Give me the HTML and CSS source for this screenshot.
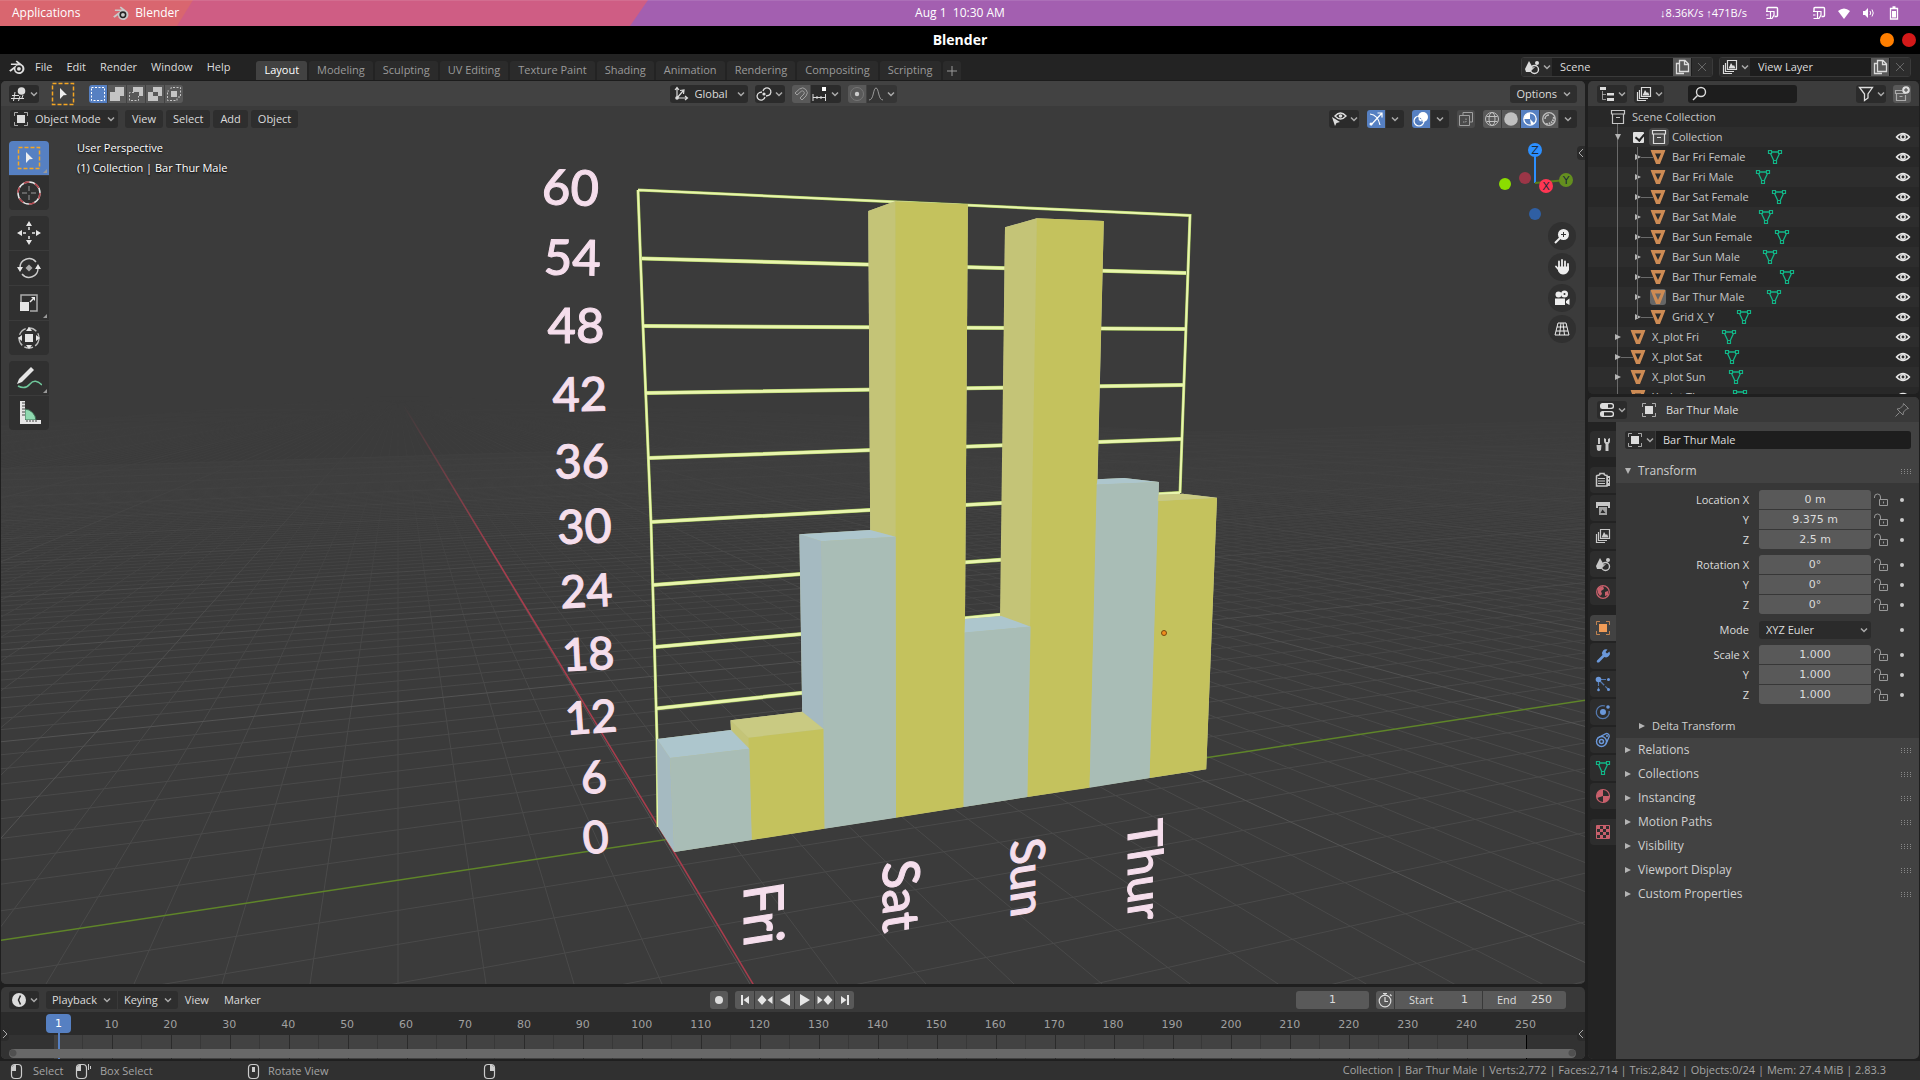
FILE: index.html
```html
<!DOCTYPE html>
<html lang="en">
<head>
<meta charset="utf-8">
<title>Blender</title>
<link rel="stylesheet" href="styles.css">
</head>
<body>
<svg class="defs" width="0" height="0" aria-hidden="true">
  <symbol id="i-caret" viewBox="0 0 8 8"><path d="M1 2.500 4 5.500 7 2.500" fill="none" stroke="currentColor" stroke-width="1.500"/></symbol>
  <symbol id="i-blender" viewBox="0 0 16 16"><path d="M1 11.200 7.500 6.200H2.600V4.800H8.800L6.800 3.200 7.900 2.200 13.600 6.700A4.700 4.700 0 1 1 5.200 10L2.300 12.300Z" fill="currentColor"/><circle cx="9.700" cy="9.600" r="3.100" fill="#232323"/><circle cx="9.700" cy="9.600" r="1.700" fill="currentColor"/></symbol>
  <symbol id="i-view3d" viewBox="0 0 16 16"><path d="M4 6 2.500 15M9 10 7.500 15M1 9.500H8M0 12.500H13M12 9 11 12" fill="none" stroke="currentColor"/><circle cx="10.500" cy="5" r="3.800" fill="currentColor"/></symbol>
  <symbol id="i-object" viewBox="0 0 16 16"><path d="M1.500 5V1.500H5M11 1.500H14.500V5M14.500 11V14.500H11M5 14.500H1.500V11" fill="none" stroke="currentColor" opacity=".7"/><path d="M4 4H12V12H4Z" fill="currentColor"/></symbol>
  <symbol id="i-cursor" viewBox="0 0 24 24"><rect x="1.500" y="1.500" width="21" height="21" fill="none" stroke="#f5a623" stroke-width="1.500" stroke-dasharray="4 2"/><path d="M9 6 16 13 12.500 13.200 9 17Z" fill="#eee"/></symbol>
  <symbol id="i-box" viewBox="0 0 18 18"><rect x="2.500" y="2.500" width="13" height="13" fill="none" stroke="#fff" stroke-dasharray="2 1.500"/></symbol>
  <symbol id="i-box2" viewBox="0 0 18 18"><path d="M7 2H16V11H12V16H2V7H7Z" fill="#c4c4c4"/></symbol>
  <symbol id="i-box3" viewBox="0 0 18 18"><path d="M6 2H16V11H12V7H6Z" fill="#c4c4c4"/><path d="M7 7.500H2.500V15.500H11.500V11" fill="none" stroke="#c4c4c4" stroke-dasharray="2 1.500"/></symbol>
  <symbol id="i-box4" viewBox="0 0 18 18"><path d="M7 2H16V11H12V16H2V7H7ZM7 7V11H12V7Z" fill="#c4c4c4" fill-rule="evenodd"/></symbol>
  <symbol id="i-box5" viewBox="0 0 18 18"><path d="M6 6H12V12H6Z" fill="#c4c4c4"/><path d="M6 4V2.500H15.500V12H13M12 13.500V15.500H2.500V6H4" fill="none" stroke="#c4c4c4" stroke-dasharray="2 1.500"/></symbol>
  <symbol id="i-axes" viewBox="0 0 16 16"><path d="M4 2V12H14M4 12 10 5M2 4 4 1.500 6 4M12 10 14.500 12 12 14M7 4.500 11 4 10.500 8" fill="none" stroke="currentColor" stroke-width="1.200"/><circle cx="4" cy="12" r="1.800" fill="currentColor"/></symbol>
  <symbol id="i-link" viewBox="0 0 16 16"><g fill="none" stroke="currentColor" stroke-width="1.300"><path d="M7 5A4 4 0 1 1 12.500 9.500L10 10"/><path d="M9 11A4 4 0 1 1 3.500 6.500L6 6"/></g><circle cx="8" cy="8" r="1.600" fill="currentColor"/></symbol>
  <symbol id="i-magnet" viewBox="0 0 16 16"><path d="M2 7 6.500 3A4.800 4.800 0 0 1 13 10L9 14 7 12 11 8A2 2 0 0 0 8.300 5.200L4 9Z" fill="none" stroke="currentColor"/></symbol>
  <symbol id="i-snap" viewBox="0 0 16 16"><path d="M1 8V15M1 11.500H14M5 10V13M9 10V13M13.500 8V15" fill="none" stroke="currentColor"/><path d="M10 1H14V5H10Z" fill="#fff"/></symbol>
  <symbol id="i-prop" viewBox="0 0 16 16"><circle cx="8" cy="8" r="6.500" fill="none" stroke="#777"/><circle cx="8" cy="8" r="2.200" fill="#ccc"/></symbol>
  <symbol id="i-curve" viewBox="0 0 16 16"><path d="M1 14C6 14 5 2 8 2S10 14 15 14" fill="none" stroke="#999"/></symbol>
  <symbol id="i-eye" viewBox="0 0 16 16"><path d="M1.500 8Q8 1 14.500 8Q8 15 1.500 8Z" fill="none" stroke="currentColor" stroke-width="1.500"/><circle cx="8" cy="8" r="2.200" fill="none" stroke="currentColor" stroke-width="1.500"/></symbol>
  <symbol id="i-vis" viewBox="0 0 16 16"><path d="M4 5Q9.500-1 15 5Q9.500 11 4 5Z" fill="none" stroke="currentColor" stroke-width="1.400"/><circle cx="9.500" cy="5" r="1.800" fill="currentColor"/><path d="M1 6 9 11 5.500 12 4 15Z" fill="currentColor"/></symbol>
  <symbol id="i-gizmo" viewBox="0 0 16 16"><path d="M2 3Q10 4 12 14M3 14 14 2M9.500 2H14V6.500" fill="none" stroke="currentColor" stroke-width="1.200"/><circle cx="3" cy="13" r="1.500" fill="currentColor"/></symbol>
  <symbol id="i-overlay" viewBox="0 0 16 16"><circle cx="10" cy="6" r="5" fill="currentColor"/><circle cx="6" cy="10" r="5" fill="none" stroke="currentColor" stroke-width="1.200"/><circle cx="6" cy="10" r="3" fill="none" stroke="#4772b3" stroke-dasharray="1.500 1"/></symbol>
  <symbol id="i-xray" viewBox="0 0 16 16"><path d="M5 1.500H14.500V11M11.500 4.500V14.500H1.500V4.500ZM5 4V1.500M11 11H14.500" fill="none" stroke="currentColor"/><path d="M5 11H8V7" fill="none" stroke="currentColor" stroke-dasharray="1.500 1"/></symbol>
  <symbol id="i-wire" viewBox="0 0 16 16"><g fill="none" stroke="currentColor"><circle cx="8" cy="8" r="6.500"/><ellipse cx="8" cy="8" rx="3" ry="6.500"/><path d="M2.500 5.500H13.500M2.500 10.500H13.500"/></g></symbol>
  <symbol id="i-solid" viewBox="0 0 16 16"><circle cx="8" cy="8" r="6.800" fill="currentColor"/></symbol>
  <symbol id="i-mat" viewBox="0 0 16 16"><circle cx="8" cy="8" r="6.200" fill="none" stroke="currentColor" stroke-width="1.300"/><path d="M8 2A6 6 0 0 0 2 8H8L9 14 12.500 12.500 8 8Z" fill="currentColor"/></symbol>
  <symbol id="i-rend" viewBox="0 0 16 16"><circle cx="8" cy="8" r="6.300" fill="none" stroke="currentColor" stroke-width="1.300"/><path d="M4 8A4 4 0 0 1 8 4" fill="none" stroke="currentColor" stroke-width="1.500"/><path d="M13 6Q12 13 5 13" fill="none" stroke="currentColor" stroke-width="2" stroke-dasharray="1.500 1"/></symbol>
  <symbol id="i-scene" viewBox="0 0 16 16"><path d="M5 2 9 9 6.500 13H2L1 10Z" fill="currentColor"/><circle cx="13" cy="4" r="2" fill="currentColor"/><circle cx="10.500" cy="10.500" r="4" fill="none" stroke="currentColor" stroke-width="1.400"/><path d="M8.500 10.500Q8.500 8.500 10.500 8.500" fill="none" stroke="currentColor"/></symbol>
  <symbol id="i-layer" viewBox="0 0 16 16"><path d="M5.500 1.500H14.500V10.500H5.500Z M3.500 4V12.500H12M1.500 6V14.500H10" fill="none" stroke="currentColor" stroke-width="1.200"/><path d="M6.500 9.500 9 4 11 7 12 6 13.500 9.500Z" fill="currentColor"/></symbol>
  <symbol id="i-copy" viewBox="0 0 16 16"><path d="M5.500 1.500H11L14.500 5V12.500H5.500ZM10.500 1.500V5.500H14.500M5 4.500H2.500V14.500H10" fill="none" stroke="currentColor" stroke-width="1.300"/></symbol>
  <symbol id="i-x" viewBox="0 0 16 16"><path d="M4 4 12 12M12 4 4 12" fill="none" stroke="currentColor"/></symbol>
  <symbol id="i-tree" viewBox="0 0 16 16"><path d="M1 1H7V4H1ZM8 7H15V9.500H8ZM8 12H15V15H8Z" fill="currentColor"/><path d="M3.500 5V13.500H7M3.500 8.500H7" fill="none" stroke="currentColor" opacity=".6"/></symbol>
  <symbol id="i-search" viewBox="0 0 16 16"><circle cx="10" cy="6" r="4.500" fill="none" stroke="currentColor" stroke-width="1.400"/><path d="M6.500 9.500 2 14" stroke="currentColor" stroke-width="1.400"/></symbol>
  <symbol id="i-filter" viewBox="0 0 16 16"><path d="M1.500 1.500H14.500L10 8V12L6.500 14.500V8Z" fill="none" stroke="currentColor" stroke-width="1.300"/></symbol>
  <symbol id="i-coll" viewBox="0 0 16 16"><path d="M1.500 1.500H14.500V5H1.500ZM2.500 5V14.500H13.500V5M6 8.500H10" fill="none" stroke="currentColor" stroke-width="1.200"/></symbol>
  <symbol id="i-newcoll" viewBox="0 0 16 16"><path d="M8 4.500H1.500V7.500H12M2.500 7.500V14.500H11.500V9M5.500 10.500H8.500" fill="none" stroke="#aaa" stroke-width="1.200"/><circle cx="12" cy="4" r="3.800" fill="#ddd"/><path d="M12 2V6M10 4H14" stroke="#444"/></symbol>
  <symbol id="i-mesh" viewBox="0 0 16 16"><path d="M.5 1H15.500L10 15H6ZM5 4.500 8 11 11 4.500Z" fill="#cd8b54" fill-rule="evenodd"/></symbol>
  <symbol id="i-data" viewBox="0 0 16 16"><path d="M4.500 3H11.500M3.500 4.500 7 12M12.500 4.500 9 12" fill="none" stroke="#12b587" stroke-width="1.300"/><path d="M1.500 1.500H4.500V4.500H1.500ZM11.500 1.500H14.500V4.500H11.500ZM6.500 11.500H9.500V14.500H6.500Z" fill="none" stroke="#12b587" stroke-width="1.200"/></symbol>
  <symbol id="i-props" viewBox="0 0 16 16"><rect x="1" y="1" width="14" height="6" rx="2.500" fill="currentColor"/><rect x="1" y="9" width="14" height="6" rx="2.500" fill="currentColor"/><path d="M9 2.200H12A1.800 1.800 0 0 1 12 5.800H9ZM5 10.200H12A1.800 1.800 0 0 1 12 13.800H5Z" fill="#2b2b2b"/></symbol>
  <symbol id="i-pin" viewBox="0 0 16 16"><path d="M9.500 1.500 14.500 6.500 12.500 7 9.500 10 9 13 3 7 6 6.500 9 3.500ZM5.500 10.500 1.500 14.500" fill="none" stroke="currentColor"/></symbol>
  <symbol id="i-tool" viewBox="0 0 16 16"><path d="M3 2H5V8H3ZM1.500 9H6.500L6 14Q4 16 2 14ZM9 2V5Q9 7 10.500 8V15H13.500V8Q15 7 15 5V2L13 3V6H11V3Z" fill="currentColor"/></symbol>
  <symbol id="i-render" viewBox="0 0 16 16"><path d="M2 3.500Q5 3.500 5 1.500H9Q9 3.500 12 3.500V14H1.500V4Z" fill="none" stroke="currentColor" stroke-width="1.500"/><path d="M3 6.500H10M3 9H10M3 11.500H10" stroke="currentColor" stroke-width="1.200"/><path d="M12 4H15V14H12Z" fill="currentColor"/><path d="M13 6H14V7.500H13ZM13 9.500H14V11H13Z" fill="#2b2b2b"/></symbol>
  <symbol id="i-output" viewBox="0 0 16 16"><path d="M1 2H15V8H13V6H3V8H1Z" fill="currentColor"/><path d="M4 7H12V15H4Z" fill="currentColor" opacity=".75"/><path d="M5.500 13 7.500 9.500 10.500 13Z" fill="#2b2b2b"/></symbol>
  <symbol id="i-world" viewBox="0 0 16 16"><circle cx="8" cy="8" r="6.300" fill="none" stroke="#c9606c" stroke-width="1.300"/><path d="M3 4 8 2 9 5 6 7 7 10 5 12 3 9ZM10 8 13 7 13 11 10 12Z" fill="#c9606c"/></symbol>
  <symbol id="i-wrench" viewBox="0 0 16 16"><path d="M2 12.500 7.500 7A4 4 0 0 1 12.500 1.500L10.500 4 12 5.500 14.500 3.500A4 4 0 0 1 9.300 9L4 14.500Q1 15 2 12.500Z" fill="#6b98da"/></symbol>
  <symbol id="i-part" viewBox="0 0 16 16"><path d="M3.500 4V14M5 5 13 13M5 3.500H13" stroke="#5478ad" stroke-width="1.200" stroke-dasharray="6 1.500"/><g fill="#6b98da"><circle cx="3.500" cy="3.500" r="2.800"/><circle cx="13.500" cy="3.500" r="1.500"/><circle cx="13.500" cy="13.500" r="1.500"/><circle cx="3.500" cy="14" r="1.300"/></g></symbol>
  <symbol id="i-phys" viewBox="0 0 16 16"><path d="M10 2A6.500 6.500 0 1 0 14.200 7" fill="none" stroke="#5478ad" stroke-width="1.300"/><circle cx="8" cy="8" r="3" fill="#6b98da"/><circle cx="13" cy="3" r="1.800" fill="#6b98da"/></symbol>
  <symbol id="i-cons" viewBox="0 0 16 16"><path d="M2.500 6 10.500 1.800A2.600 2.600 0 0 1 14.200 4.500L11 12" fill="none" stroke="#6b98da" stroke-width="1.300"/><circle cx="6.500" cy="9.500" r="5" fill="none" stroke="#6b98da" stroke-width="1.400"/><circle cx="6.500" cy="9.500" r="2" fill="none" stroke="#6b98da" stroke-width="1.500"/><circle cx="12" cy="4" r="1" fill="#6b98da"/></symbol>
  <symbol id="i-material" viewBox="0 0 16 16"><circle cx="8" cy="8" r="6.500" fill="none" stroke="#c9606c" stroke-width="1.200"/><path d="M8 8V1.500A6.500 6.500 0 0 0 2 10L8 8V14.500A6.500 6.500 0 0 0 14.500 8Z" fill="#c9606c"/></symbol>
  <symbol id="i-texture" viewBox="0 0 16 16"><path d="M1.500 1.500H14.500V14.500H1.500Z" fill="none" stroke="#c9606c"/><path d="M2 2H5V5H2ZM8 2H11V5H8ZM5 5H8V8H5ZM11 5H14V8H11ZM2 8H5V11H2ZM8 8H11V11H8ZM5 11H8V14H5ZM11 11H14V14H11Z" fill="#c9606c"/></symbol>
  <symbol id="i-lock" viewBox="0 0 16 16"><path d="M6.500 7.500H14.500V13.500H6.500ZM1.500 6V5A3 3 0 0 1 7.500 5V7M10.500 9.500V11.500" fill="none" stroke="#999"/></symbol>
  <symbol id="i-clock" viewBox="0 0 16 16"><circle cx="8" cy="8" r="7" fill="currentColor"/><path d="M9.500 3.500 7.500 8 9.500 12.500" fill="none" stroke="#2b2b2b" stroke-width="1.500"/></symbol>
  <symbol id="i-stopwatch" viewBox="0 0 16 16"><circle cx="8" cy="9" r="5.800" fill="none" stroke="currentColor" stroke-width="1.200"/><path d="M8 5V9.500H11M6 1.500H10M8 1.500V3M13 2.500 14.500 4" fill="none" stroke="currentColor" stroke-width="1.200"/></symbol>
  <symbol id="i-mouse" viewBox="0 0 16 18"><rect x="2.500" y="2.500" width="10" height="14" rx="3.500" fill="none" stroke="currentColor" stroke-width="1.200"/></symbol>
  <symbol id="i-phone" viewBox="0 0 14 14"><path d="M2 5V2.500Q2 1.500 3 1.500H11.500Q12.500 1.500 12.500 2.500V9.500Q12.500 10.500 11.500 10.500H9.500" fill="none" stroke="#fff" stroke-width="1.400"/><path d="M1 5.500H5.500V12.500H1.500M1 9H3.500M5.500 5.500H9V9L7 12.500H5.500" fill="none" stroke="#fff" stroke-width="1.200"/></symbol>
</svg>

<header class="sysbar">
  <svg class="sysbar-art" preserveAspectRatio="none" viewBox="0 0 1920 26" aria-hidden="true">
    <path d="M0 0H1920V26H0Z" fill="#a35fb0"/><path d="M0 0H648L630 26H0Z" fill="#cf5d84"/><path d="M0 0H193L177 26H0Z" fill="#d9666f"/><path d="M0 0H1920V1H0Z" fill="#fff" opacity=".1"/>
  </svg>
  <nav class="sys-left"><a href="#">Applications</a><a href="#" class="app"><svg width="18" height="18"><use href="#i-blender"/></svg>Blender</a></nav>
  <time class="sys-time">Aug 1&nbsp; 10:30 AM</time>
  <div class="sys-right"><span class="net">↓8.36K/s ↑471B/s</span>
    <svg width="14" height="14"><use href="#i-phone"/></svg>
    <svg class="spaced" width="14" height="14"><use href="#i-phone"/></svg>
    <svg width="14" height="14" viewBox="0 0 14 14"><path d="M1 5Q7 0 13 5L7 13Z" fill="#fff"/></svg>
    <svg width="14" height="14" viewBox="0 0 14 14"><path d="M1 5H3L6 2V12L3 9H1Z" fill="#fff"/><path d="M8 5Q9.500 7 8 9M10 3.500Q12.500 7 10 10.500" fill="none" stroke="#fff"/></svg>
    <svg width="14" height="14" viewBox="0 0 14 14"><path d="M3.500 2.500H10.500V13H3.500ZM5.500 1H8.500" fill="none" stroke="#fff" stroke-width="1.300"/><path d="M5 5H9V11.500H5Z" fill="#fff"/></svg>
  </div>
</header>
<div class="titlebar"><h1>Blender</h1><div class="winbtns"><button class="min" aria-label="Minimize"></button><button class="close" aria-label="Close"></button></div></div>

<div class="menubar">
  <svg class="logo" width="18" height="18"><use href="#i-blender"/></svg>
  <nav class="menus"><button>File</button><button>Edit</button><button>Render</button><button>Window</button><button>Help</button></nav>
  <nav class="tabs"><button class="on">Layout</button><button>Modeling</button><button>Sculpting</button><button>UV Editing</button><button>Texture Paint</button><button>Shading</button><button>Animation</button><button>Rendering</button><button>Compositing</button><button>Scripting</button><button class="plus" aria-label="Add workspace"><svg width="10" height="10" viewBox="0 0 10 10"><path d="M5 0V10M0 5H10" stroke="currentColor"/></svg></button></nav>
  <div class="idblocks">
    <div class="group idb"><button class="dd" aria-label="Browse scene"><svg width="16" height="16"><use href="#i-scene"/></svg><svg class="c" width="8" height="8"><use href="#i-caret"/></svg></button><input value="Scene" aria-label="Scene"><button class="lite" aria-label="New scene"><svg width="16" height="16"><use href="#i-copy"/></svg></button><button class="off" aria-label="Delete scene"><svg width="16" height="16"><use href="#i-x"/></svg></button></div>
    <div class="group idb"><button class="dd" aria-label="Browse layer"><svg width="16" height="16"><use href="#i-layer"/></svg><svg class="c" width="8" height="8"><use href="#i-caret"/></svg></button><input value="View Layer" aria-label="View layer"><button class="lite" aria-label="New layer"><svg width="16" height="16"><use href="#i-copy"/></svg></button><button class="off" aria-label="Delete layer"><svg width="16" height="16"><use href="#i-x"/></svg></button></div>
  </div>
</div>

<main class="work">
  <div class="left">
    <section class="area viewport">
      <svg class="scene" viewBox="1 81 1584 903" preserveAspectRatio="xMidYMid slice" role="img" aria-label="3D bar chart">
        <defs>
          <linearGradient id="fade" gradientUnits="userSpaceOnUse" x1="0" y1="395" x2="0" y2="700"><stop offset="0" stop-color="#fff" stop-opacity="0"/><stop offset=".3" stop-color="#fff" stop-opacity=".3"/><stop offset="1" stop-color="#fff"/></linearGradient>
          <mask id="far" maskUnits="userSpaceOnUse" x="0" y="380" width="1600" height="620"><path d="M0 380H1600V1000H0Z" fill="url(#fade)"/></mask>
          <linearGradient id="redfade" gradientUnits="userSpaceOnUse" x1="0" y1="405" x2="0" y2="560"><stop offset="0" stop-color="#a83c4c" stop-opacity="0"/><stop offset="1" stop-color="#a83c4c"/></linearGradient>
        </defs>
        <path d="M0 80H1600V1000H0Z" fill="#3b3b3b"/>
        <g mask="url(#far)"><path id="minor" fill="none" stroke="#4a4a4a"/><path id="major" fill="none" stroke="#545454"/></g>
        <path d="M0 940.500 1600 698" stroke="#5f8529" stroke-width="1.500"/>
        <path d="M398 396 520 598 674 852 756 989" fill="none" stroke="url(#redfade)" stroke-width="1.500"/>
        <g class="wire">
          <path class="edge" d="M642 258.500 1186 273M644 326 1185 329M646 393 1183 385M649 458 1181 439M651 522 870 510 1002 503 1180 493M653 585 801 574 1001 559.700M655 647 802 634 1001 614.700M656 708.500 803 692.700"/>
          <path class="edge frame-edge" d="M638 190 643 326 651 522 657 739 658 827M638 190 1190 215.500 1180 493"/>
          <path d="M642 258.500 1186 273M644 326 1185 329M646 393 1183 385M649 458 1181 439M651 522 870 510 1002 503 1180 493M653 585 801 574 1001 559.700M655 647 802 634 1001 614.700M656 708.500 803 692.700"/>
          <path class="frame-line" d="M638 190 643 326 651 522 657 739 658 827M638 190 1190 215.500 1180 493"/>
        </g>
        <path d="M657 739 731 730 730.500 720.300 802.200 711.700 799.400 534.300 870.200 530 868.300 211 895.200 201.300 967.900 204.300 965 619 1001.400 616 1005 227.300 1036.800 218.300 1103.800 221 1097.600 479.300 1124 478 1159 482 1158.500 494.700 1182.600 493.700 1217 497.700 1206.200 769.300 674.300 852 658.300 827Z" fill="#b9c29a"/>
        <g fill="#c4c477"><path d="M1005 227.300 1037 218.300 1031 627 1000 616Z"/><path d="M868.300 211 895.200 201.300 896 537 870.200 530Z"/></g>
        <g fill="#c4c25d"><path d="M1036.800 218.300 1103.800 221 1089.600 787.700 1027.300 797Z"/><path d="M895.200 201.300 967.900 204.300 963.600 807 896 817.700Z"/><path d="M1157.600 501 1217 497.700 1206.200 769.300 1149.500 778Z"/></g>
        <path d="M1097.500 479.300 1124 478 1159 482 1096.700 484.700Z" fill="#adc6cd"/><path d="M1096.700 484.500 1159 482 1149.500 778 1089.600 787.700Z" fill="#a9bdb6"/>
        <path d="M1158.500 494.700 1182.600 493.700 1217 497.700 1157.600 501Z" fill="#c9ca82"/>
        <path d="M965 619 1001.400 616 1030.600 626.700 964.600 632.700Z" fill="#adc6cd"/><path d="M964.600 632.500 1030.600 626.500 1027.300 797 963.600 807Z" fill="#a9bdb6"/>
        <path d="M799.400 534.300 870.200 530 895.600 536.700 821.600 541.300Z" fill="#adc6cd"/><path d="M799.400 534.300 821.600 541.300 824 729 802.200 712Z" fill="#a5bac1"/><path d="M821.500 541.200 895.600 536.700 896 817.700 824.400 828.700Z" fill="#a9bdb6"/>
        <path d="M730.500 720.300 802.200 711.700 823.400 729 748.400 738Z" fill="#c9ca82"/><path d="M730.500 720.300 748.500 737.700 749.500 749 731 730.500Z" fill="#c4c477"/><path d="M748.400 737.700 823.400 729 824.400 828.700 751.700 840Z" fill="#c4c25d"/>
        <path d="M657 739 731 730 749.400 748.700 670 758Z" fill="#adc6cd"/><path d="M657 739 670 758 674.300 852 658.300 827Z" fill="#a5bac1"/><path d="M670 758 749.400 748.700 751.700 840 674.300 852Z" fill="#a9bdb6"/>
        <circle cx="1164" cy="633" r="2.500" fill="#f08c1e" stroke="#7a4a10"/>
        <g class="ticktext">
          <text font-size="49" transform="translate(570 205) rotate(2)">60</text>
          <text font-size="49" transform="translate(572 275) rotate(1)">54</text>
          <text font-size="49" transform="translate(576 343)">48</text>
          <text font-size="47" transform="translate(580 411) rotate(-1)">42</text>
          <text font-size="47" transform="translate(582 478) rotate(-1)">36</text>
          <text font-size="47" transform="translate(585 543) rotate(-2)">30</text>
          <text font-size="45" transform="translate(587 607) rotate(-3)">24</text>
          <text font-size="45" transform="translate(589 670) rotate(-3)">18</text>
          <text font-size="45" transform="translate(592 733) rotate(-4)">12</text>
          <text font-size="45" transform="translate(595 793) rotate(-5)">6</text>
          <text font-size="45" transform="translate(597 853) rotate(-5)">0</text>
        </g>
        <g class="daytext">
          <text font-size="55" transform="translate(744 886) rotate(90) skewX(9)">Fri</text>
          <text font-size="51" transform="translate(883 863) rotate(90) skewX(9)">Sat</text>
          <text font-size="47" transform="translate(1011 841) rotate(90) skewX(9)">Sun</text>
          <text font-size="48" transform="translate(1128 823) rotate(90) skewX(9)">Thur</text>
        </g>
        <g class="gizmo">
          <path d="M1535 150V183" stroke="#2c8fff" stroke-width="2"/><path d="M1566 180 1535 183" stroke="#5a7f1c" stroke-width="2"/>
          <circle cx="1535" cy="214" r="6" fill="#2f5fa3"/><circle cx="1525" cy="178" r="6" fill="#9b3647"/><circle cx="1566" cy="180" r="7" fill="#648f1f"/>
          <circle cx="1505" cy="184" r="6" fill="#8bdc00"/><circle cx="1546" cy="186" r="7" fill="#ff3653"/><circle cx="1535" cy="150" r="7" fill="#2c8fff"/>
          <text x="1535" y="154">Z</text><text x="1546" y="190">X</text><text x="1566" y="184">Y</text>
        </g>
      </svg>
      <div class="hdr toolhdr">
        <div class="side l"><button class="dd" aria-label="Editor type"><svg width="16" height="16"><use href="#i-view3d"/></svg><svg class="c" width="8" height="8"><use href="#i-caret"/></svg></button>
          <svg class="active-tool" width="24" height="24"><use href="#i-cursor"/></svg>
          <div class="group modes"><button class="blue" aria-label="Set"><svg width="18" height="18"><use href="#i-box"/></svg></button><button class="lite" aria-label="Extend"><svg width="18" height="18"><use href="#i-box2"/></svg></button><button class="lite" aria-label="Subtract"><svg width="18" height="18"><use href="#i-box3"/></svg></button><button class="lite" aria-label="Difference"><svg width="18" height="18"><use href="#i-box4"/></svg></button><button class="lite" aria-label="Intersect"><svg width="18" height="18"><use href="#i-box5"/></svg></button></div></div>
        <div class="mid">
          <label class="pick orient"><svg width="16" height="16"><use href="#i-axes"/></svg><select aria-label="Orientation"><option>Global</option></select><svg class="c" width="8" height="8"><use href="#i-caret"/></svg></label>
          <button class="dd" aria-label="Pivot"><svg width="16" height="16"><use href="#i-link"/></svg><svg class="c" width="8" height="8"><use href="#i-caret"/></svg></button>
          <div class="group"><button class="lite dim" aria-label="Snap"><svg width="16" height="16"><use href="#i-magnet"/></svg></button><button class="dd" aria-label="Snap to"><svg width="16" height="16"><use href="#i-snap"/></svg><svg class="c" width="8" height="8"><use href="#i-caret"/></svg></button></div>
          <div class="group"><button class="lite" aria-label="Proportional"><svg width="16" height="16"><use href="#i-prop"/></svg></button><button class="dd off" aria-label="Falloff"><svg width="16" height="16"><use href="#i-curve"/></svg><svg class="c" width="8" height="8"><use href="#i-caret"/></svg></button></div>
        </div>
        <div class="side r"><button class="txt">Options<svg class="c" width="8" height="8"><use href="#i-caret"/></svg></button></div>
      </div>
      <div class="hdr viewhdr">
        <div class="vl"><label class="pick mode"><svg width="16" height="16"><use href="#i-object"/></svg><select aria-label="Mode"><option>Object Mode</option></select><svg class="c" width="8" height="8"><use href="#i-caret"/></svg></label>
          <div class="vmenus"><button class="txt">View</button><button class="txt">Select</button><button class="txt">Add</button><button class="txt">Object</button></div></div>
        <div class="vr">
          <button class="dd" aria-label="Visibility"><svg width="16" height="16"><use href="#i-vis"/></svg><svg class="c" width="8" height="8"><use href="#i-caret"/></svg></button>
          <div class="group"><button class="blue" aria-label="Gizmos"><svg width="16" height="16"><use href="#i-gizmo"/></svg></button><button class="cc" aria-label="Gizmo options"><svg class="c" width="8" height="8"><use href="#i-caret"/></svg></button></div>
          <div class="group"><button class="blue" aria-label="Overlays"><svg width="16" height="16"><use href="#i-overlay"/></svg></button><button class="cc" aria-label="Overlay options"><svg class="c" width="8" height="8"><use href="#i-caret"/></svg></button></div>
          <button class="sq dim" aria-label="X-Ray"><svg width="16" height="16"><use href="#i-xray"/></svg></button>
          <div class="group shade"><button class="lite" aria-label="Wireframe"><svg width="16" height="16"><use href="#i-wire"/></svg></button><button class="lite" aria-label="Solid"><svg width="16" height="16"><use href="#i-solid"/></svg></button><button class="blue" aria-label="Material preview"><svg width="16" height="16"><use href="#i-mat"/></svg></button><button class="lite" aria-label="Rendered"><svg width="16" height="16"><use href="#i-rend"/></svg></button><button class="cc" aria-label="Shading options"><svg class="c" width="8" height="8"><use href="#i-caret"/></svg></button></div>
        </div>
      </div>
      <div class="vbody">
        <div class="tools">
          <div class="tgroup"><button class="blue" aria-label="Select box"><svg width="24" height="24"><use href="#i-cursor"/></svg><i></i></button>
            <button aria-label="Cursor"><svg width="26" height="26" viewBox="0 0 26 26"><circle cx="13" cy="13" r="11" fill="none" stroke="#e6e6e6" stroke-width="1.500"/><circle cx="13" cy="13" r="11" fill="none" stroke="#b04048" stroke-width="1.500" stroke-dasharray="5.760"/><path d="M13 6V11M13 15V20M6 13H11M15 13H20" stroke="#999"/></svg></button></div>
          <div class="tgroup"><button aria-label="Move"><svg width="26" height="26" viewBox="0 0 26 26"><path d="M13 1 16 6H10ZM13 25 10 20H16ZM1 13 6 10V16ZM25 13 20 16V10Z" fill="#e6e6e6"/><path d="M13 7V10M13 16V19M7 13H10M16 13H19" stroke="#e6e6e6" stroke-width="1.500"/></svg></button>
            <button aria-label="Rotate"><svg width="26" height="26" viewBox="0 0 26 26"><path d="M4 13A9 9 0 0 1 20 7M22 13A9 9 0 0 1 6 19" fill="none" stroke="#ccc" stroke-width="1.400"/><path d="M1 12H7L4 17ZM19 14H25L22 9Z" fill="#e6e6e6"/><path d="M13 9.500 16.500 13 13 16.500 9.500 13Z" fill="#aaa"/></svg></button>
            <button aria-label="Scale"><svg width="26" height="26" viewBox="0 0 26 26"><path d="M5 13V5H21V21H14" fill="none" stroke="#aaa" stroke-width="1.500"/><path d="M4 12H13V21H4Z" fill="#e6e6e6"/><path d="M14 12 17 9" stroke="#eee" stroke-width="1.500"/><path d="M15 7H19V11Z" fill="#eee"/></svg><i></i></button>
            <button aria-label="Transform"><svg width="26" height="26" viewBox="0 0 26 26"><circle cx="13" cy="13" r="10" fill="none" stroke="#bbb" stroke-width="1.400" stroke-dasharray="9 2.500"/><path d="M9 9H17V17H9ZM13 2 16 6H10ZM13 24 10 20H16ZM2 13 6 10V16ZM24 13 20 16V10Z" fill="#e6e6e6"/></svg></button></div>
          <div class="tgroup"><button aria-label="Annotate"><svg width="26" height="26" viewBox="0 0 26 26"><path d="M2 21Q9 25 14 19T26 20" fill="none" stroke="#6fc79b" stroke-width="1.500"/><path d="M1 19 3 14 15 2 18 5 6 17Z" fill="#e6e6e6"/></svg><i></i></button>
            <button aria-label="Measure"><svg width="26" height="26" viewBox="0 0 26 26"><path d="M9 9A12 12 0 0 1 20 20H9Z" fill="#8fd9b0" stroke="#3d6b52"/><path d="M4 1H9V20H25V24H4Z" fill="#e6e6e6"/><path d="M6 3H9M6 6H9M6 9H9M6 12H9M6 15H9M11 20V22M14 20V22M17 20V22M20 20V22" stroke="#444"/></svg></button></div>
        </div>
        <div class="info"><p>User Perspective</p><p>(1) Collection | Bar Thur Male</p></div>
        <div class="nav">
          <button aria-label="Zoom"><svg width="16" height="16" viewBox="0 0 16 16"><circle cx="9.500" cy="6.500" r="5.500" fill="#eee"/><path d="M6 10 1 15" stroke="#eee" stroke-width="2"/><path d="M9.500 4V9M7 6.500H12" stroke="#333"/></svg></button>
          <button aria-label="Pan"><svg width="16" height="16" viewBox="0 0 16 16"><path d="M5 8V2.500M8 8V1M11 8V2.500M14 8V5M2 7.500 5 11" stroke="#eee" stroke-width="1.800" stroke-linecap="round"/><path d="M4 7.500H15V11Q13 15.500 9 15.500 6 15.500 4 12Z" fill="#eee"/></svg></button>
          <button aria-label="Camera"><svg width="16" height="16" viewBox="0 0 16 16"><circle cx="4.500" cy="4.500" r="3" fill="#eee"/><circle cx="10.500" cy="4" r="3.500" fill="#eee"/><circle cx="10.500" cy="4" r="1" fill="#333"/><path d="M1 8.500H11V15H1ZM12 11 15.500 8.500V15L12 13Z" fill="#eee"/></svg></button>
          <button aria-label="Perspective"><svg width="16" height="16" viewBox="0 0 16 16"><path d="M4 2H12L15 14H1ZM3 6H13M2 10H14M7 2 5.500 14M9 2 10.500 14" fill="none" stroke="#eee"/></svg></button>
        </div>
        <button class="flap" aria-label="Toggle sidebar"><svg width="6" height="8" viewBox="0 0 6 8"><path d="M5 0 1 4 5 8" fill="none" stroke="currentColor"/></svg></button>
      </div>
    </section>

    <section class="area timeline">
      <div class="hdr tlhdr">
        <div class="tl-l"><button class="dd" aria-label="Editor type"><svg width="16" height="16"><use href="#i-clock"/></svg><svg class="c" width="8" height="8"><use href="#i-caret"/></svg></button>
          <div class="group"><button class="txt">Playback<svg class="c" width="8" height="8"><use href="#i-caret"/></svg></button><button class="txt">Keying<svg class="c" width="8" height="8"><use href="#i-caret"/></svg></button></div>
          <button class="flat">View</button><button class="flat">Marker</button></div>
        <div class="tl-m"><button class="sq lite" aria-label="Record"><svg width="16" height="16" viewBox="0 0 16 16"><circle cx="8" cy="8" r="4" fill="#ddd"/></svg></button>
          <div class="group play">
            <button class="lite" aria-label="First"><svg width="16" height="16" viewBox="0 0 16 16"><path d="M4 3H6V13H4ZM12 4V12L6.500 8Z" fill="#e6e6e6"/></svg></button><button class="lite" aria-label="Previous key"><svg width="16" height="16" viewBox="0 0 16 16"><path d="M5 3 9.500 8 5 13 .5 8ZM15.500 4V12L10.500 8Z" fill="#e6e6e6"/></svg></button><button class="lite" aria-label="Play reverse"><svg width="16" height="16" viewBox="0 0 16 16"><path d="M13 2V14L3 8Z" fill="#e6e6e6"/></svg></button><button class="lite" aria-label="Play"><svg width="16" height="16" viewBox="0 0 16 16"><path d="M3 2V14L13 8Z" fill="#e6e6e6"/></svg></button><button class="lite" aria-label="Next key"><svg width="16" height="16" viewBox="0 0 16 16"><path d="M11 3 15.500 8 11 13 6.500 8ZM.5 4V12L5.500 8Z" fill="#e6e6e6"/></svg></button><button class="lite" aria-label="Last"><svg width="16" height="16" viewBox="0 0 16 16"><path d="M10 3H12V13H10ZM4 4V12L9.500 8Z" fill="#e6e6e6"/></svg></button>
          </div></div>
        <div class="tl-r"><input class="frame" value="1" aria-label="Current frame">
          <div class="group range"><button class="lite" aria-label="Preview range"><svg width="16" height="16"><use href="#i-stopwatch"/></svg></button><label class="num">Start<input value="1"></label><label class="num">End<input value="250"></label></div></div>
      </div>
      <div class="track">
        <div class="out before"></div>
        <ol class="ruler"><li>10</li><li>20</li><li>30</li><li>40</li><li>50</li><li>60</li><li>70</li><li>80</li><li>90</li><li>100</li><li>110</li><li>120</li><li>130</li><li>140</li><li>150</li><li>160</li><li>170</li><li>180</li><li>190</li><li>200</li><li>210</li><li>220</li><li>230</li><li>240</li><li class="last">250</li></ol>
        <div class="playhead"><b>1</b></div>
        <div class="scroll"></div>
        <button class="flap lf" aria-label="Toggle channels"><svg width="6" height="8" viewBox="0 0 6 8"><path d="M1 0 5 4 1 8" fill="none" stroke="currentColor"/></svg></button>
        <button class="flap" aria-label="Toggle sidebar"><svg width="6" height="8" viewBox="0 0 6 8"><path d="M5 0 1 4 5 8" fill="none" stroke="currentColor"/></svg></button>
      </div>
    </section>
  </div>

  <aside class="right">
    <section class="area outliner">
      <div class="hdr ohdr">
        <button class="dd" aria-label="Editor type"><svg width="16" height="16"><use href="#i-tree"/></svg><svg class="c" width="8" height="8"><use href="#i-caret"/></svg></button>
        <button class="dd" aria-label="Display mode"><svg width="16" height="16"><use href="#i-layer"/></svg><svg class="c" width="8" height="8"><use href="#i-caret"/></svg></button>
        <label class="search"><svg width="16" height="16"><use href="#i-search"/></svg><input aria-label="Search"></label>
        <button class="dd" aria-label="Filter"><svg width="16" height="16"><use href="#i-filter"/></svg><svg class="c" width="8" height="8"><use href="#i-caret"/></svg></button>
        <button class="sq lite" aria-label="New collection"><svg width="16" height="16"><use href="#i-newcoll"/></svg></button>
      </div>
      <ul class="rows">
        <li class="root"><svg width="16" height="16"><use href="#i-coll"/></svg><span>Scene Collection</span></li>
        <li class="coll"><b class="down"></b><input type="checkbox" checked aria-label="Collection visible"><svg class="hl" width="20" height="18" viewBox="-2 -1 20 18"><use href="#i-coll" width="16" height="16"/></svg><span>Collection</span><svg class="eye" width="16" height="16"><use href="#i-eye"/></svg></li>
        <li class="obj"><b></b><svg width="16" height="16"><use href="#i-mesh"/></svg><span>Bar Fri Female</span><svg class="d" width="16" height="16"><use href="#i-data"/></svg><svg class="eye" width="16" height="16"><use href="#i-eye"/></svg></li>
        <li class="obj"><b></b><svg width="16" height="16"><use href="#i-mesh"/></svg><span>Bar Fri Male</span><svg class="d" width="16" height="16"><use href="#i-data"/></svg><svg class="eye" width="16" height="16"><use href="#i-eye"/></svg></li>
        <li class="obj"><b></b><svg width="16" height="16"><use href="#i-mesh"/></svg><span>Bar Sat Female</span><svg class="d" width="16" height="16"><use href="#i-data"/></svg><svg class="eye" width="16" height="16"><use href="#i-eye"/></svg></li>
        <li class="obj"><b></b><svg width="16" height="16"><use href="#i-mesh"/></svg><span>Bar Sat Male</span><svg class="d" width="16" height="16"><use href="#i-data"/></svg><svg class="eye" width="16" height="16"><use href="#i-eye"/></svg></li>
        <li class="obj"><b></b><svg width="16" height="16"><use href="#i-mesh"/></svg><span>Bar Sun Female</span><svg class="d" width="16" height="16"><use href="#i-data"/></svg><svg class="eye" width="16" height="16"><use href="#i-eye"/></svg></li>
        <li class="obj"><b></b><svg width="16" height="16"><use href="#i-mesh"/></svg><span>Bar Sun Male</span><svg class="d" width="16" height="16"><use href="#i-data"/></svg><svg class="eye" width="16" height="16"><use href="#i-eye"/></svg></li>
        <li class="obj"><b></b><svg width="16" height="16"><use href="#i-mesh"/></svg><span>Bar Thur Female</span><svg class="d" width="16" height="16"><use href="#i-data"/></svg><svg class="eye" width="16" height="16"><use href="#i-eye"/></svg></li>
        <li class="obj sel"><b></b><svg width="16" height="16"><use href="#i-mesh"/></svg><span>Bar Thur Male</span><svg class="d" width="16" height="16"><use href="#i-data"/></svg><svg class="eye" width="16" height="16"><use href="#i-eye"/></svg></li>
        <li class="obj end"><b></b><svg width="16" height="16"><use href="#i-mesh"/></svg><span>Grid X_Y</span><svg class="d" width="16" height="16"><use href="#i-data"/></svg><svg class="eye" width="16" height="16"><use href="#i-eye"/></svg></li>
        <li class="top"><b></b><svg width="16" height="16"><use href="#i-mesh"/></svg><span>X_plot Fri</span><svg class="d" width="16" height="16"><use href="#i-data"/></svg><svg class="eye" width="16" height="16"><use href="#i-eye"/></svg></li>
        <li class="top"><b></b><svg width="16" height="16"><use href="#i-mesh"/></svg><span>X_plot Sat</span><svg class="d" width="16" height="16"><use href="#i-data"/></svg><svg class="eye" width="16" height="16"><use href="#i-eye"/></svg></li>
        <li class="top"><b></b><svg width="16" height="16"><use href="#i-mesh"/></svg><span>X_plot Sun</span><svg class="d" width="16" height="16"><use href="#i-data"/></svg><svg class="eye" width="16" height="16"><use href="#i-eye"/></svg></li>
        <li class="top"><b></b><svg width="16" height="16"><use href="#i-mesh"/></svg><span>X_plot Thur</span><svg class="d" width="16" height="16"><use href="#i-data"/></svg><svg class="eye" width="16" height="16"><use href="#i-eye"/></svg></li>
      </ul>
    </section>

    <section class="area props">
      <div class="hdr phdr"><button class="dd" aria-label="Editor type"><svg width="16" height="16"><use href="#i-props"/></svg><svg class="c" width="8" height="8"><use href="#i-caret"/></svg></button><svg class="pobj" width="16" height="16"><use href="#i-object"/></svg><span>Bar Thur Male</span><svg class="pin" width="16" height="16"><use href="#i-pin"/></svg></div>
      <div class="pbody">
        <nav class="ptabs">
          <div><button aria-label="Tool"><svg width="16" height="16"><use href="#i-tool"/></svg></button></div>
          <div><button aria-label="Render"><svg width="16" height="16"><use href="#i-render"/></svg></button><button aria-label="Output"><svg width="16" height="16"><use href="#i-output"/></svg></button><button aria-label="View layer"><svg width="16" height="16"><use href="#i-layer"/></svg></button><button aria-label="Scene"><svg width="16" height="16"><use href="#i-scene"/></svg></button><button aria-label="World"><svg width="16" height="16"><use href="#i-world"/></svg></button></div>
          <div><button class="on" aria-label="Object"><svg width="16" height="16"><use href="#i-object"/></svg></button><button aria-label="Modifiers"><svg width="16" height="16"><use href="#i-wrench"/></svg></button><button aria-label="Particles"><svg width="16" height="16"><use href="#i-part"/></svg></button><button aria-label="Physics"><svg width="16" height="16"><use href="#i-phys"/></svg></button><button aria-label="Constraints"><svg width="16" height="16"><use href="#i-cons"/></svg></button><button aria-label="Data"><svg width="16" height="16"><use href="#i-data"/></svg></button><button aria-label="Material"><svg width="16" height="16"><use href="#i-material"/></svg></button></div>
          <div><button aria-label="Texture"><svg width="16" height="16"><use href="#i-texture"/></svg></button></div>
        </nav>
        <div class="pcontent">
          <div class="group name"><button class="dd" aria-label="Browse object"><svg width="16" height="16"><use href="#i-object"/></svg><svg class="c" width="8" height="8"><use href="#i-caret"/></svg></button><input value="Bar Thur Male" aria-label="Object name"></div>
          <h2 class="open"><b class="down"></b>Transform<i class="grip"></i></h2>
          <div class="sub">
            <div class="fields">
              <div class="f"><label for="lx">Location X</label><input id="lx" value="0 m"><svg width="16" height="16"><use href="#i-lock"/></svg><i></i></div>
              <div class="f"><label for="ly">Y</label><input id="ly" value="9.375 m"><svg width="16" height="16"><use href="#i-lock"/></svg><i></i></div>
              <div class="f"><label for="lz">Z</label><input id="lz" value="2.5 m"><svg width="16" height="16"><use href="#i-lock"/></svg><i></i></div>
            </div>
            <div class="fields">
              <div class="f"><label for="rx">Rotation X</label><input id="rx" value="0°"><svg width="16" height="16"><use href="#i-lock"/></svg><i></i></div>
              <div class="f"><label for="ry">Y</label><input id="ry" value="0°"><svg width="16" height="16"><use href="#i-lock"/></svg><i></i></div>
              <div class="f"><label for="rz">Z</label><input id="rz" value="0°"><svg width="16" height="16"><use href="#i-lock"/></svg><i></i></div>
            </div>
            <div class="fields">
              <div class="f"><label for="rm">Mode</label><span class="pick"><select id="rm"><option>XYZ Euler</option></select><svg class="c" width="8" height="8"><use href="#i-caret"/></svg></span><em></em><i></i></div>
            </div>
            <div class="fields">
              <div class="f"><label for="sx">Scale X</label><input id="sx" value="1.000"><svg width="16" height="16"><use href="#i-lock"/></svg><i></i></div>
              <div class="f"><label for="sy">Y</label><input id="sy" value="1.000"><svg width="16" height="16"><use href="#i-lock"/></svg><i></i></div>
              <div class="f"><label for="sz">Z</label><input id="sz" value="1.000"><svg width="16" height="16"><use href="#i-lock"/></svg><i></i></div>
            </div>
            <h3><b></b>Delta Transform</h3>
          </div>
          <h2><b></b>Relations<i class="grip"></i></h2>
          <h2><b></b>Collections<i class="grip"></i></h2>
          <h2><b></b>Instancing<i class="grip"></i></h2>
          <h2><b></b>Motion Paths<i class="grip"></i></h2>
          <h2><b></b>Visibility<i class="grip"></i></h2>
          <h2><b></b>Viewport Display<i class="grip"></i></h2>
          <h2><b></b>Custom Properties<i class="grip"></i></h2>
        </div>
      </div>
    </section>
  </aside>
</main>

<footer class="status">
  <div class="hints">
    <span class="h1"><svg width="16" height="18"><use href="#i-mouse"/><path d="M3 9V5Q4 2.500 7 2.500V9Z" fill="currentColor"/></svg>Select</span>
    <span class="h2"><svg width="20" height="18"><use href="#i-mouse" width="16" height="18"/><path d="M3 9V5Q4 2.500 7 2.500V9Z" fill="currentColor"/><path d="M14.500 2V8M16.500 4V7" stroke="currentColor"/></svg>Box Select</span>
    <span class="h3"><svg width="16" height="18"><use href="#i-mouse"/><path d="M6 5H9V10H6Z" fill="currentColor"/></svg>Rotate View</span>
    <span class="h4"><svg width="16" height="18"><use href="#i-mouse"/><path d="M8 2.500Q11 2.500 12 5V9H8Z" fill="currentColor"/></svg></span>
  </div>
  <p>Collection | Bar Thur Male | Verts:2,772 | Faces:2,714 | Tris:2,842 | Objects:0/24 | Mem: 27.4 MiB | 2.83.3</p>
</footer>
<script src="scene.js"></script>
</body>
</html>
```
FILE: styles.css
```css
* { box-sizing: border-box; }
html, body { height: 100%; }
body { margin: 0; display: flex; flex-direction: column; overflow: hidden; background: #1f1f1f; color: #dcdcdc; font: 11px/18px "Open Sans", sans-serif; }
button, input, select { font: inherit; color: inherit; border: 0; margin: 0; padding: 0; background: none; min-width: 0; }
button { display: flex; align-items: center; justify-content: center; flex: none; white-space: nowrap; }
svg { flex: none; display: block; }
p, h1, h2, h3, ul, ol { margin: 0; padding: 0; list-style: none; font-weight: 400; font-size: inherit; }
a { color: inherit; text-decoration: none; }
select { appearance: none; }
.defs { position: absolute; }
.c { color: #aaa; }
.frame, .num input, .ruler, .playhead, .f input { font-family: "DejaVu Sans", sans-serif; }

.sysbar { position: relative; flex: none; height: 26px; display: flex; align-items: center; justify-content: space-between; color: #fff; font: 12px/26px "Open Sans", sans-serif; }
.sysbar > * { position: relative; }
.sysbar .sysbar-art { position: absolute; inset: 0; width: 100%; height: 100%; }
.sys-left, .sys-right { flex: 1 1 0; display: flex; align-items: center; }
.sys-left { padding: 0 7px 0 12px; gap: 32px; }
.app { display: flex; align-items: center; gap: 5px; }
.app svg { color: #c9c9c9; }
.sys-right { justify-content: flex-end; gap: 11px; padding-right: 19px; }
.net { font-size: 11px; margin-right: 7px; }
.spaced { margin-left: 22px; }
.titlebar { flex: none; height: 28px; background: #000; display: flex; align-items: center; justify-content: center; position: relative; }
.titlebar h1 { font: 700 14px/28px "Open Sans", sans-serif; color: #fff; }
.winbtns { position: absolute; right: 4px; top: 7px; display: flex; gap: 8px; }
.winbtns button { width: 14px; height: 14px; border-radius: 50%; }
.min { background: #ff7f00; }
.close { background: #d41919; }

.menubar { flex: none; height: 27px; background: #232323; display: flex; padding: 0 9px 0 8px; border-bottom: 1px solid #1c1c1c; }
.logo { margin: 4px 9px 0 0; color: #e0e0e0; }
.menus { display: flex; gap: 14px; height: 26px; margin-right: 26px; }
.tabs { display: flex; gap: 2px; align-self: flex-end; }
.tabs button { height: 19px; padding: 0 8px 2px; background: #2b2b2b; color: #9a9a9a; border-radius: 3px 3px 0 0; }
.tabs .on { background: #424242; color: #fff; }
.tabs .plus { padding: 0 4px; }
.idblocks { margin-left: auto; display: flex; gap: 6px; padding-top: 3px; }
.idb { height: 20px; background: #1d1d1d; border: 1px solid #3a3a3a; }
.idb > input { width: 119px; padding: 0 7px; }
.idb .off { width: 20px; background: #2d2d2d; color: #666; }
.group { display: flex; border-radius: 3px; overflow: hidden; gap: 1px; }
.dd { width: 30px; height: 18px; background: #2b2b2b; border-radius: 3px; gap: 3px; }
.group .dd, .group .txt { border-radius: 0; }
.idb > * { height: 18px; }
.lite { background: #595959; width: 18px; height: 18px; }
.blue { background: #5680c2; width: 18px; height: 18px; color: #fff; }
.sq { width: 18px; height: 18px; border-radius: 3px; }
.sq.dim { background: #4a4a4a; }
.shade .lite { color: #c0c0c0; }
.dim { color: #a0a0a0; }
.dd.off { background: #353535; }
.cc { width: 18px; height: 18px; background: #2b2b2b; }
.txt { height: 18px; background: #2e2e2e; border-radius: 3px; padding: 0 6px; gap: 6px; }
.pick { display: flex; align-items: center; height: 18px; background: #2b2b2b; border-radius: 3px; padding: 0 3px; }
.pick select { flex: 1; height: 18px; line-height: 18px; }

.work { flex: 1; min-height: 0; display: flex; gap: 3px; padding: 0 1px; }
.left { flex: 1; min-width: 0; display: flex; flex-direction: column; gap: 3px; }
.right { flex: none; width: 331px; display: flex; flex-direction: column; gap: 3px; }
.area { border-radius: 5px; overflow: hidden; position: relative; display: flex; flex-direction: column; }
.hdr { flex: none; height: 25px; display: flex; align-items: center; padding: 0 8px; position: relative; }
.viewport { flex: 1; min-height: 0; background: #3b3b3b; }
.scene { position: absolute; inset: 0; width: 100%; height: 100%; }
.wire path { fill: none; stroke: #e9f5ae; stroke-width: 3; }
.wire .edge { stroke: #a9c95f; stroke-width: 4; }
.wire .frame-edge { stroke-width: 3; }
.wire .frame-line { stroke-width: 2; }
.ticktext text { font-family: Lato, sans-serif; font-weight: 500; fill: #f5deec; stroke: #f5deec; text-anchor: middle; }
.daytext text { font-family: Lato, sans-serif; font-weight: 500; fill: #f5deec; stroke: #f5deec; }
.gizmo text { font: 11px "DejaVu Sans", sans-serif; text-anchor: middle; fill: #1c2a3a; }
.toolhdr { background: #424242; }
.side { display: flex; align-items: center; flex: 33 1 0; }
.side.r { flex-grow: 34; justify-content: flex-end; }
.active-tool { margin: 0 14px 0 12px; }
.mid { display: flex; gap: 7px; }
.orient { width: 78px; gap: 6px; }
.viewhdr { height: 26px; justify-content: space-between; padding-left: 9px; }
.vl, .vr, .vmenus { display: flex; }
.vl { gap: 7px; }
.vmenus { gap: 3px; }
.vmenus .txt { padding: 0 7px; }
.vr { gap: 8px; }
.mode { width: 108px; gap: 6px; }
.vbody { position: relative; flex: 1; display: flex; align-items: flex-start; }
.tools { display: flex; flex-direction: column; gap: 6px; padding: 9px 0 0 8px; }
.tgroup { display: flex; flex-direction: column; gap: 1px; border-radius: 4px; overflow: hidden; }
.tgroup button { width: 40px; height: 34px; background: #303030; position: relative; }
.tgroup .blue { background: #5680c2; }
.tgroup i { position: absolute; right: 2px; bottom: 2px; border: 2px solid transparent; border-right-color: #999; border-bottom-color: #999; }
.info { padding: 6px 0 0 28px; line-height: 20px; color: #fff; text-shadow: 0 1px 2px #000; }
.nav { position: absolute; right: 9px; top: 90px; display: flex; flex-direction: column; gap: 3px; }
.nav button { width: 28px; height: 28px; border-radius: 50%; background: #303030; }
.flap { position: absolute; right: 0; top: 14px; width: 8px; height: 14px; background: #2b2b2b; border-radius: 4px 0 0 4px; color: #aaa; }
.flap.lf { right: auto; left: 0; border-radius: 0 4px 4px 0; }

.timeline { flex: none; background: #393939; }
.tlhdr { justify-content: space-between; padding-right: 19px; }
.tl-l, .tl-m, .tl-r { display: flex; align-items: center; }
.tl-l { flex: 67 1 0; gap: 7px; }
.tl-r { flex: 68 1 0; justify-content: flex-end; gap: 7px; }
.tl-m { gap: 7px; }
.flat { margin-right: 8px; }
.play button { width: 19px; }
.frame { width: 73px; height: 18px; border-radius: 3px; background: #595959; text-align: center; }
.num { display: flex; align-items: center; justify-content: space-between; width: 87px; height: 18px; background: #595959; padding: 0 14px; }
.num input { width: 24px; text-align: right; }
.num:last-child { width: 83px; }
.track { position: relative; height: 47px; background: linear-gradient(#2b2b2b 23px, #424242 23px); }
.ruler { position: absolute; inset: 0; display: grid; grid-template-columns: repeat(25, 1fr); padding: 0 30px 0 81px; color: #a0a0a0; text-align: center; line-height: 26px; }
.ruler li { background: linear-gradient(#2b2b2b, #2b2b2b) 30px 23px / 1px 24px no-repeat, linear-gradient(#383838, #383838) 0 23px / 1px 24px no-repeat; }
.ruler .last { background: linear-gradient(#000, #000) 30px 23px / 1px 24px no-repeat, linear-gradient(#323232, #323232) 31px 23px / 40px 24px no-repeat; }
.out { position: absolute; left: 0; top: 23px; width: 53px; height: 24px; background: #323232; }
.track::after { content: ""; position: absolute; right: 0; top: 23px; width: 30px; height: 24px; background: #323232; }
.playhead { position: absolute; left: 45px; top: 2px; width: 25px; height: 45px; display: flex; flex-direction: column; align-items: center; }
.playhead b { width: 25px; height: 19px; border-radius: 4px; background: #5680c2; color: #fff; text-align: center; font-weight: 400; line-height: 20px; flex: none; }
.playhead::after { content: ""; width: 2px; flex: 1; background: #5680c2; }
.scroll { position: absolute; z-index: 1; left: 8px; right: 9px; top: 37px; height: 9px; border-radius: 5px; background: radial-gradient(circle at 4px 4px, #505050 3px, transparent 4px), radial-gradient(circle at calc(100% - 4px) 4px, #505050 3px, transparent 4px), #686868; }
.track .flap { top: 15px; z-index: 1; }

.outliner { flex: 313 1 0; min-height: 0; background: #282828; }
.ohdr { background: #3c3c3c; margin-bottom: 1px; padding-left: 9px; gap: 7px; }
.search { display: flex; align-items: center; width: 109px; height: 18px; margin: 0 auto 0 17px; background: #1d1d1d; border-radius: 3px; padding-left: 3px; }
.search input { width: 80px; }
.rows li { height: 20px; display: flex; align-items: center; position: relative; padding-right: 8px; color: #c6c6c6; background: #282828; }
.rows li:nth-child(even) { background: #2d2d2d; }
.rows b, h2 b, h3 b { flex: none; width: 6px; height: 6px; background: #b4b4b4; clip-path: polygon(0 0, 100% 50%, 0 100%); }
.rows b.down, h2 b.down { clip-path: polygon(0 0, 100% 0, 50% 100%); }
.rows li > * { position: relative; }
.rows li::before { content: ""; position: absolute; left: 29px; top: 0; bottom: 0; width: 1px; background: #6a6a6a; }
.rows .root::before { top: 17px; }
.rows .obj::after { content: ""; position: absolute; left: 49px; top: 0; bottom: 0; width: 1px; background: #6a6a6a; }
.rows .end::after { bottom: 9px; }
.root { padding-left: 22px; gap: 6px; }
.coll { padding-left: 27px; }
.coll input { appearance: none; width: 11px; height: 11px; margin: 0 5px 0 12px; background: #e0e0e0; border-radius: 1px; }
.coll input::after { content: ""; display: block; width: 4px; height: 7px; margin: 0 0 0 4px; border: solid #222; border-width: 0 2px 2px 0; transform: rotate(40deg); }
.hl { background: #484848; border-radius: 4px; color: #ddd; margin-right: 3px; }
.obj { padding-left: 47px; }
.top { padding-left: 27px; }
.rows .obj, .rows .top { background-image: linear-gradient(#6a6a6a, #6a6a6a); background-repeat: no-repeat; background-size: 12px 1px; background-position: 53px 10px; }
.rows .top { background-position: 33px 10px; }
.obj b + svg, .top b + svg { margin: 0 6px 0 9px; border-radius: 3px; }
.rows li.sel > b + svg { background: #666; }
.d { margin-left: 22px; }
.eye { margin-left: auto; color: #e6e6e6; }

.props { flex: 662 1 0; background: #424242; }
.phdr { background: #393939; padding: 0 9px; }
.pobj { margin: 0 9px 0 14px; }
.pin { margin-left: auto; color: #888; }
.pbody { flex: 1; display: flex; }
.ptabs { width: 28px; background: #232323; padding: 9px 0 0 2px; display: flex; flex-direction: column; gap: 10px; }
.ptabs div { display: flex; flex-direction: column; gap: 2px; }
.ptabs button { width: 26px; height: 26px; background: #2d2d2d; border-radius: 4px 0 0 4px; color: #c8c8c8; }
.ptabs .on { background: #424242; color: #f29c57; }
.pcontent { flex: 1; padding-top: 9px; min-width: 0; }
.name { margin: 0 8px 10px 9px; background: #393939; }
.name input { flex: 1; height: 18px; background: #1d1d1d; padding: 0 7px; }
h2, h3 { display: flex; align-items: center; height: 24px; padding: 0 7px 0 9px; gap: 7px; font-size: 12px; color: #cfcfcf; }
.grip { margin-left: auto; width: 11px; height: 5px; background: repeating-linear-gradient(90deg, #888 0 1px, transparent 1px 3px); mask: repeating-linear-gradient(#000 0 1px, transparent 1px 2px); }
.sub { background: #373737; padding: 7px 0 1px; }
.fields { display: grid; gap: 1px; margin-bottom: 6px; }
.f { display: grid; grid-template-columns: 1fr 112px 16px 13px; column-gap: 2px; align-items: center; height: 19px; padding-right: 15px; }
.f label { text-align: right; padding-right: 8px; }
.f input { height: 19px; background: #595959; text-align: center; width: 100%; }
.fields .f:first-child input { border-radius: 3px 3px 0 0; }
.fields .f:last-child input { border-radius: 0 0 3px 3px; }
.f i { width: 4px; height: 4px; border-radius: 50%; background: #ccc; justify-self: end; }
.f .pick { padding: 0 3px 0 7px; }
h3 { font-size: 11px; padding-left: 23px; height: 22px; margin-top: 11px; }

.status { flex: none; height: 19px; margin-top: 2px; background: #303030; color: #a4a4a4; display: flex; justify-content: space-between; padding: 0 34px 0 9px; }
.hints { display: flex; }
.hints span { display: flex; align-items: center; }
.hints svg { color: #ccc; }
.h1 { gap: 8px; width: 65px; }
.h2 { gap: 6px; width: 172px; }
.h3 { gap: 6px; width: 236px; }
```
FILE: scene.js
```js
// Floor grid in two-point perspective: one family of lines meets at the
// near vanishing point, the other far off to the right.
const near = { x: 398, y: 396 };
const far = { x: 3900, y: 350 };
const paths = { minor: "", major: "" };

for (let k = -90; k <= 150; k++) {
  const name = (k - 4) % 10 === 0 ? "major" : "minor";
  const x = near.x + 91 * k;
  paths[name] += `M${near.x} ${near.y}L${x} 1004`;
}

for (let j = 8; j >= -120; j--) {
  const name = j % 10 === 0 ? "major" : "minor";
  const y = near.y + 1 / (0.0020644 - 0.0001205 * j);
  const slope = (y - far.y) / (far.x - near.x);
  const left = y + slope * near.x;
  const right = y - slope * (1600 - near.x);
  if (j !== 0) paths[name] += `M0 ${left}L1600 ${right}`;
}

document.getElementById("minor").setAttribute("d", paths.minor);
document.getElementById("major").setAttribute("d", paths.major);
```
